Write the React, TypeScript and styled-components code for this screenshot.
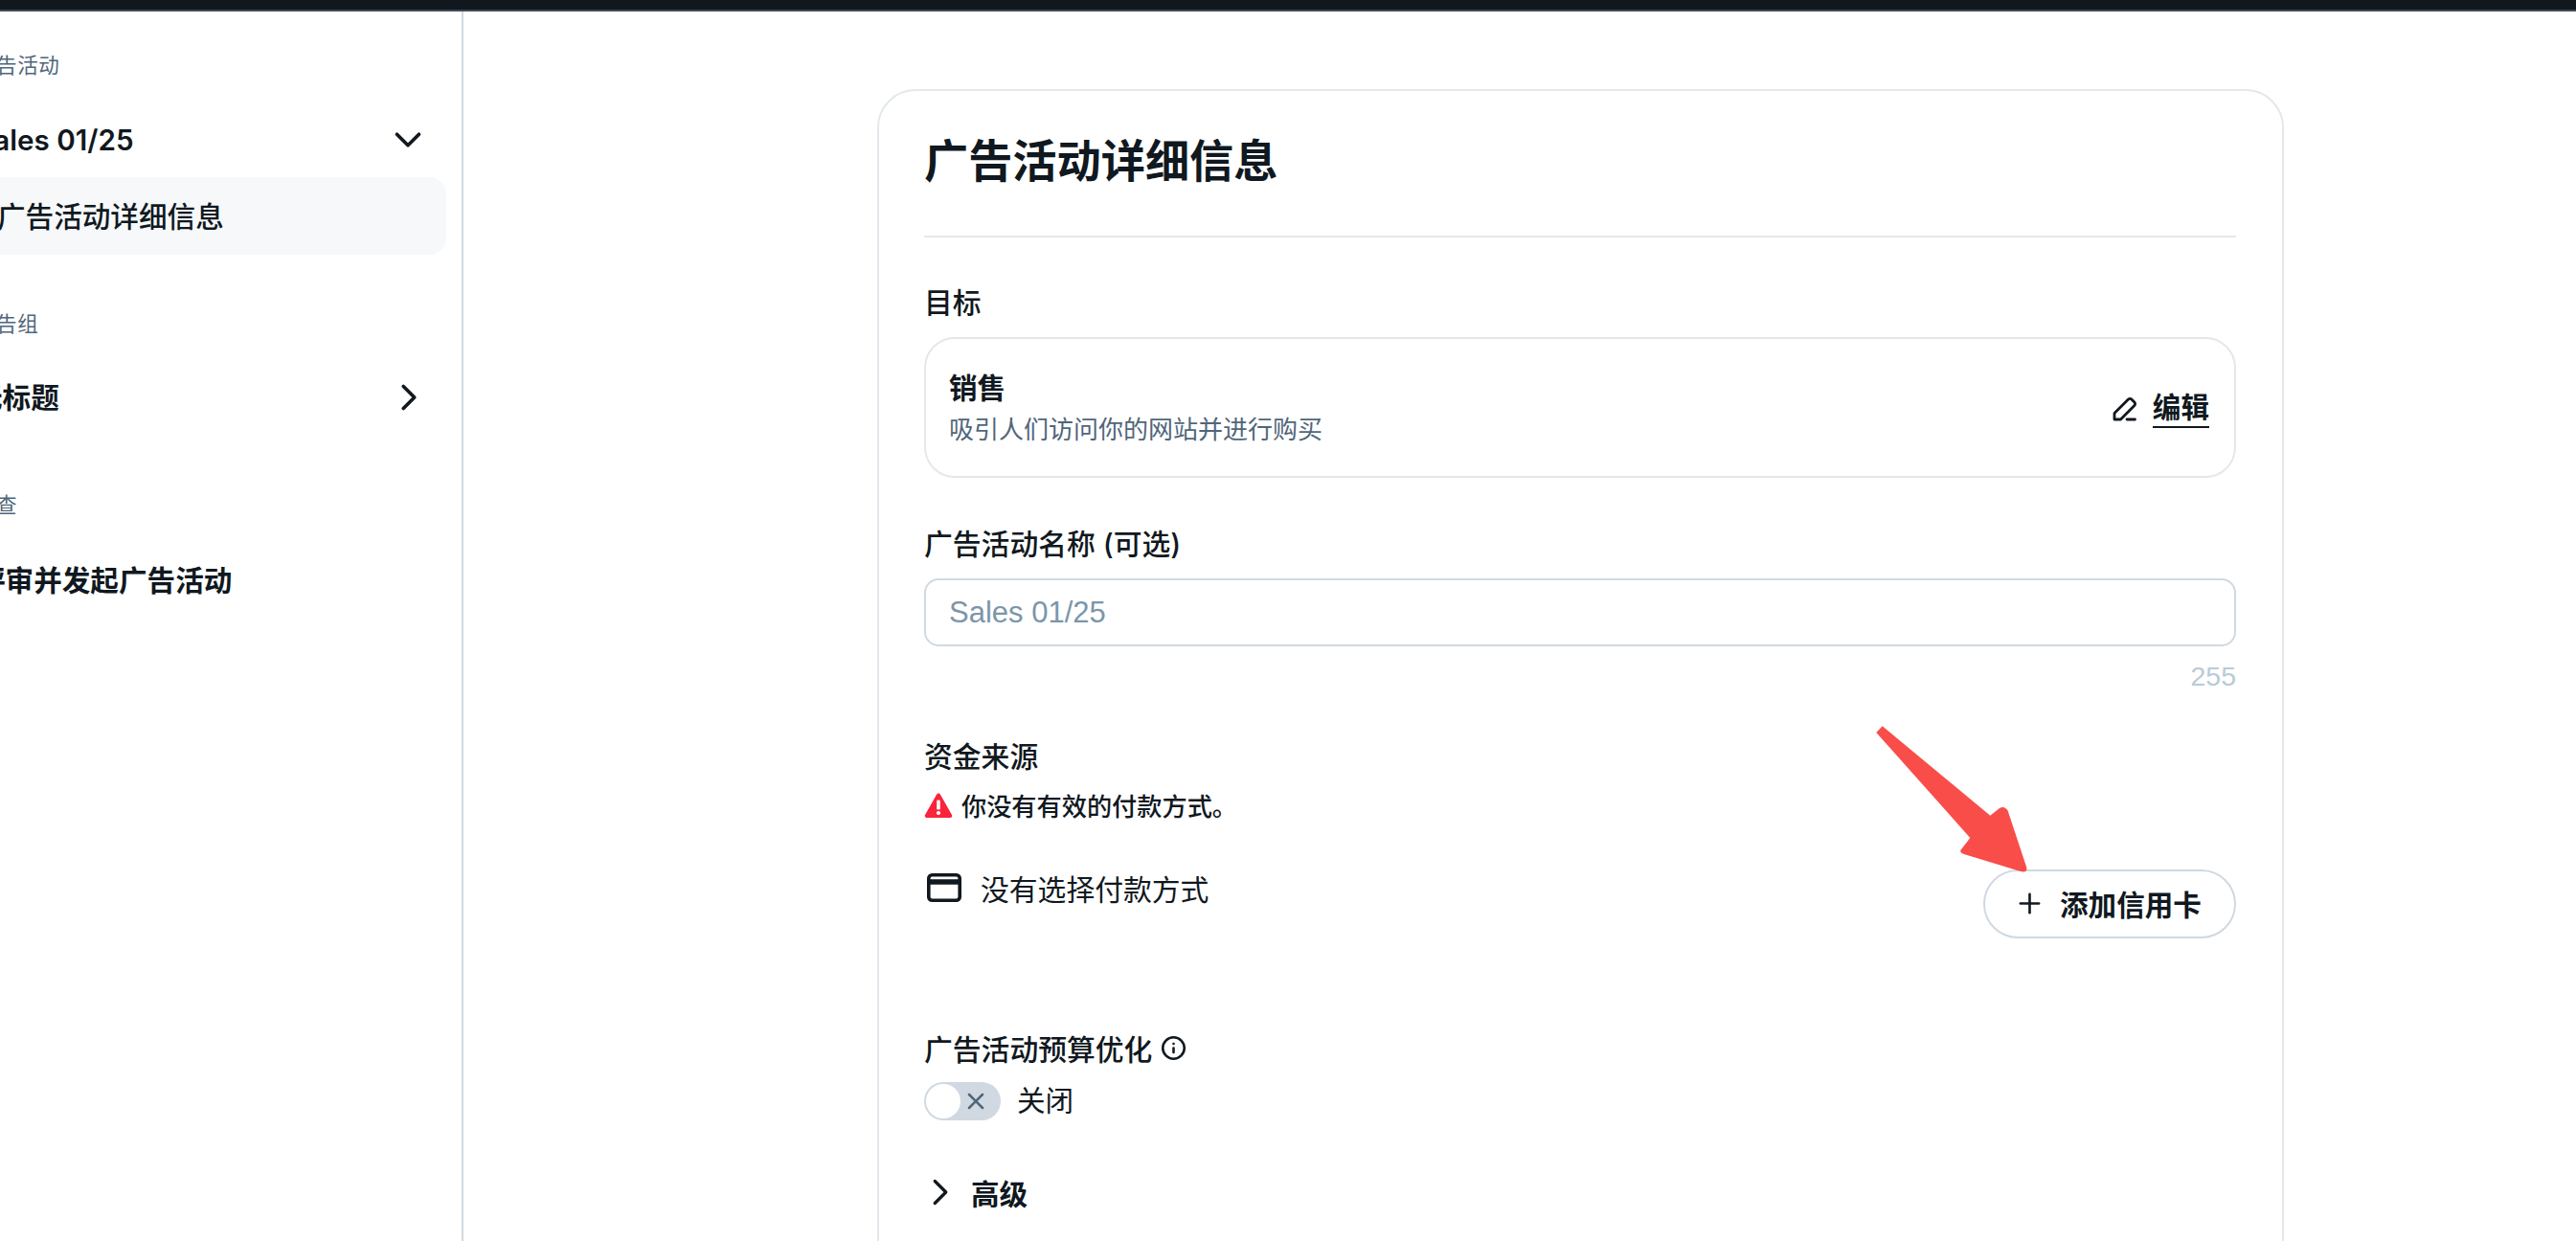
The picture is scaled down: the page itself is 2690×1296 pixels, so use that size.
import React from "react";
import styled, { createGlobalStyle } from "styled-components";
import { ChevronDown, ChevronRight, Info, Plus, X } from "lucide-react";

const Global = createGlobalStyle`
  html, body { margin: 0; padding: 0; background: #fff; height: 100%; overflow: hidden; }
  * { box-sizing: border-box; }
  body {
    font-family: Inter, "Noto Sans CJK SC", sans-serif;
    color: #101820;
  }
`;

const Page = styled.div`
  display: flex;
  flex-direction: column;
  height: 1296px;
  overflow: hidden;
`;
const TopBar = styled.header`
  flex: none;
  height: 12px;
  background: #10171d;
  border-bottom: 2.5px solid #3f4a55;
`;
const Body = styled.div`
  flex: 1;
  display: flex;
  min-height: 0;
`;
const Sidebar = styled.aside`
  flex: none;
  width: 484px;
  border-right: 2px solid #d0d9e1;
  overflow: hidden;
  padding-top: 41px;
`;
const NavGroup = styled.section<{ $top: number }>`
  margin-top: ${(p) => p.$top}px;
  margin-left: -26px;
  width: 492px;
`;
const GroupLabel = styled.div`
  height: 30px;
  line-height: 30px;
  font-size: 21.5px;
  letter-spacing: 0.6px;
  color: #51667a;
`;
const NavRow = styled.div<{ $top: number; $shift?: number }>`
  display: flex;
  align-items: center;
  justify-content: space-between;
  height: 50px;
  margin-top: ${(p) => p.$top}px;
  margin-left: ${(p) => p.$shift ?? 0}px;
  padding: 0 ${(p) => 17 + (p.$shift ?? 0)}px 0 0;
  font-size: 29.6px;
  font-weight: 600;
  white-space: nowrap;
`;
const NavText = styled.span`
  padding-bottom: 3px;
`;
const ActiveRow = styled.div`
  display: flex;
  align-items: center;
  height: 81px;
  width: 492px;
  margin-top: 14px;
  padding: 0 0 2px 23px;
  border-radius: 18px;
  background: #f6f8fa;
  font-size: 29.6px;
  font-weight: 500;
  white-space: nowrap;
`;
const Main = styled.main`
  flex: 1;
  min-width: 0;
  padding: 81px 0 0 432px;
`;
const Card = styled.div`
  width: 1469px;
  height: 1400px;
  padding: 43px 48px 0 47px;
  border: 2px solid #e3e8ec;
  border-radius: 40px;
`;
const Title = styled.h1`
  margin: 0;
  height: 110px;
  line-height: 60px;
  font-size: 46.2px;
  font-weight: 700;
  border-bottom: 2px solid #e3e8ec;
`;
const Label = styled.div<{ $top: number }>`
  display: flex;
  align-items: center;
  gap: 9px;
  height: 40px;
  margin-top: ${(p) => p.$top}px;
  padding-bottom: 4px;
  font-size: 29.8px;
  font-weight: 500;
  svg { flex: none; }
`;
const ObjectiveBox = styled.div`
  display: flex;
  align-items: center;
  justify-content: space-between;
  height: 147px;
  margin-top: 16px;
  padding: 0 26px 0 24px;
  border: 2px solid #e3e8ec;
  border-radius: 32px;
`;
const ObjectiveTitle = styled.div`
  height: 40px;
  line-height: 40px;
  font-size: 29.6px;
  font-weight: 700;
`;
const ObjectiveDesc = styled.div`
  height: 36px;
  margin-top: 6px;
  line-height: 36px;
  font-size: 26px;
  color: #51667a;
`;
const EditAction = styled.div`
  display: flex;
  align-items: center;
  gap: 14px;
  padding-top: 2px;
`;
const EditLink = styled.span`
  height: 40px;
  line-height: 36px;
  font-size: 29.6px;
  font-weight: 600;
  border-bottom: 2.5px solid #101820;
`;
const InputBox = styled.div`
  display: flex;
  align-items: center;
  height: 71px;
  margin-top: 16px;
  padding: 0 24px;
  border: 2px solid #d0d9e1;
  border-radius: 15px;
  font: 400 31px "Liberation Sans", Arial, sans-serif;
  color: #7b96a9;
`;
const Counter = styled.div`
  height: 30px;
  margin-top: 16px;
  text-align: right;
  font: 400 28.5px/30px "Liberation Sans", Arial, sans-serif;
  color: #b9cbd6;
`;
const Funding = styled.section`
  position: relative;
`;
const Arrow = styled.svg`
  position: absolute;
  left: 985px;
  top: -20px;
  width: 175px;
  height: 170px;
`;
const Warning = styled.div`
  display: flex;
  align-items: center;
  gap: 9px;
  height: 36px;
  margin-top: 14px;
  padding-bottom: 3px;
  font-size: 26.2px;
  font-weight: 500;
`;
const PayRow = styled.div`
  display: flex;
  justify-content: space-between;
  align-items: flex-start;
  margin-top: 48px;
`;
const PayInfo = styled.div`
  display: flex;
  align-items: center;
  gap: 20px;
  height: 40px;
  padding: 0 0 2px 3px;
  font-size: 29.8px;
`;
const AddButton = styled.button`
  display: flex;
  align-items: center;
  gap: 15px;
  width: 264px;
  height: 72px;
  padding: 0 0 2px 30px;
  border: 2px solid #d0d9e1;
  border-radius: 36px;
  background: #fff;
  color: #101820;
  font: 600 29.6px Inter, "Noto Sans CJK SC", sans-serif;
  svg { flex: none; }
`;
const ToggleRow = styled.div`
  display: flex;
  align-items: center;
  gap: 17px;
  height: 42px;
  margin-top: 13px;
  font-size: 29.6px;
`;
const ToggleText = styled.span`
  padding-bottom: 5px;
`;
const Toggle = styled.div`
  display: flex;
  align-items: center;
  justify-content: space-between;
  width: 80px;
  height: 40px;
  padding: 2px 12px 2px 2px;
  border-radius: 20px;
  background: #d0d9e1;
  color: #51667a;
`;
const Knob = styled.span`
  flex: none;
  width: 36px;
  height: 36px;
  border-radius: 50%;
  background: #fff;
`;
const Advanced = styled.div`
  display: flex;
  align-items: center;
  gap: 9px;
  height: 40px;
  margin-top: 56px;
  padding-bottom: 4px;
  font-size: 29.6px;
  font-weight: 600;
  svg { flex: none; margin-left: -6px; }
`;

const PencilIcon = () => (
  <svg width="30" height="30" viewBox="0 0 30 30" fill="none" stroke="#101820" strokeWidth="2.8" strokeLinejoin="round" strokeLinecap="round">
    <path d="M4 26v-6.5L18.5 5a2.4 2.4 0 0 1 3.4 0l3 3a2.4 2.4 0 0 1 0 3.4L10.5 26z" />
    <path d="M17 26h8.5" />
  </svg>
);
const WarningIcon = () => (
  <svg width="30" height="28" viewBox="0 0 30 28">
    <path d="M15 1.5a2 2 0 0 1 1.8 1L29 24a2 2 0 0 1-1.8 3H2.8A2 2 0 0 1 1 24L13.2 2.5a2 2 0 0 1 1.8-1z" fill="#f9233b" />
    <rect x="13.2" y="8.5" width="3.6" height="10" rx="1.2" fill="#fff" />
    <circle cx="15" cy="22" r="2.1" fill="#fff" />
  </svg>
);
const CreditCardIcon = () => (
  <svg width="36" height="30" viewBox="0 0 36 30" fill="none" stroke="#101820">
    <rect x="1.8" y="1.8" width="32.4" height="26.4" rx="3.5" strokeWidth="3.6" />
    <path d="M2 9h32" strokeWidth="5.5" />
  </svg>
);

export default function App() {
  return (
    <Page>
      <Global />
      <TopBar />
      <Body>
        <Sidebar>
          <NavGroup $top={0}>
            <GroupLabel>广告活动</GroupLabel>
            <NavRow $top={38}>
              Sales 01/25
              <ChevronDown size={46} strokeWidth={1.9} />
            </NavRow>
            <ActiveRow>广告活动详细信息</ActiveRow>
          </NavGroup>
          <NavGroup $top={57}>
            <GroupLabel>广告组</GroupLabel>
            <NavRow $top={37} $shift={-1}>
              <NavText>无标题</NavText>
              <ChevronRight size={46} strokeWidth={1.9} />
            </NavRow>
          </NavGroup>
          <NavGroup $top={72}>
            <GroupLabel>审查</GroupLabel>
            <NavRow $top={39} $shift={2}>
              <NavText>评审并发起广告活动</NavText>
            </NavRow>
          </NavGroup>
        </Sidebar>
        <Main>
          <Card>
            <Title>广告活动详细信息</Title>
            <Label $top={48}>目标</Label>
            <ObjectiveBox>
              <div>
                <ObjectiveTitle>销售</ObjectiveTitle>
                <ObjectiveDesc>吸引人们访问你的网站并进行购买</ObjectiveDesc>
              </div>
              <EditAction>
                <PencilIcon />
                <EditLink>编辑</EditLink>
              </EditAction>
            </ObjectiveBox>
            <Label $top={49}>广告活动名称 (可选)</Label>
            <InputBox>Sales 01/25</InputBox>
            <Counter>255</Counter>
            <Funding>
              <Label $top={49}>资金来源</Label>
              <Arrow viewBox="0 0 175 170">
                <path
                  d="M9.3 15 L15.7 8.3 L128.3 101.7 L138 94 Q143 91 146.7 96.7 L166 155 Q168 162 160 160 L101.7 142.3 Q95 140 98.3 136.7 L107.3 125 Z"
                  fill="#f94d4a"
                />
              </Arrow>
              <Warning>
                <WarningIcon />
                你没有有效的付款方式。
              </Warning>
              <PayRow>
                <PayInfo>
                  <CreditCardIcon />
                  没有选择付款方式
                </PayInfo>
                <AddButton>
                  <Plus size={33} strokeWidth={1.9} />
                  添加信用卡
                </AddButton>
              </PayRow>
            </Funding>
            <Label $top={96}>
              广告活动预算优化
              <Info size={27} strokeWidth={2.3} />
            </Label>
            <ToggleRow>
              <Toggle>
                <Knob />
                <X size={28} strokeWidth={2.2} />
              </Toggle>
              <ToggleText>关闭</ToggleText>
            </ToggleRow>
            <Advanced>
              <ChevronRight size={46} strokeWidth={1.7} />
              高级
            </Advanced>
          </Card>
        </Main>
      </Body>
    </Page>
  );
}
